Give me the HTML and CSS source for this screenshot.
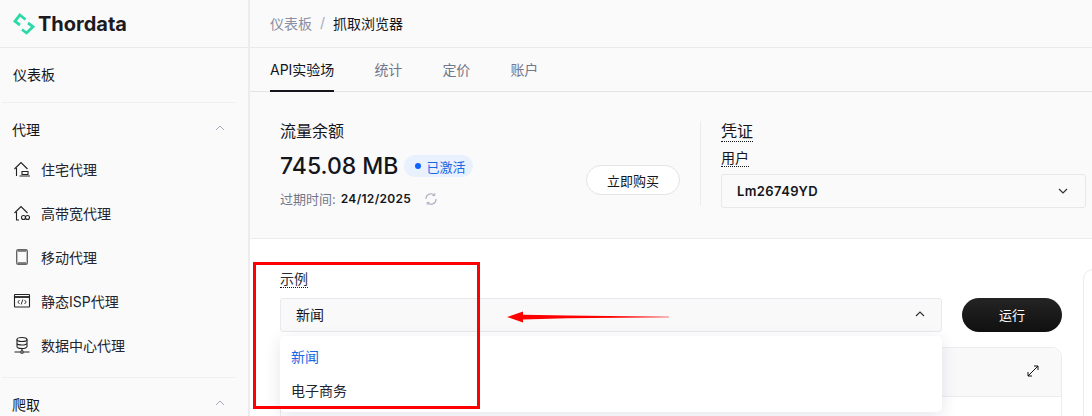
FILE: index.html
```html
<!DOCTYPE html>
<html lang="zh-CN">

<head>
  <meta charset="UTF-8" />
  <title>抓取浏览器</title>
  <link rel="stylesheet" href="styles.css">
</head>

<body>
  <div class="app">
    <!-- Sidebar -->
    <aside class="sidebar">
      <div class="logo">
        <svg class="logo-mark" width="22" height="22" viewBox="0 0 22 22" fill="none" stroke="#2bd9a8" stroke-width="2.8">
          <path d="M12.5 6.5 L6.8 2 L2 8.3 L7 12" />
          <path d="M15 10 L20 13.7 L13.5 20 L9 16.5" />
        </svg>
        <span class="logo-text">Thordata</span>
      </div>
      <div class="nav-top">仪表板</div>
      <div class="nav-group">
        <div class="nav-title"><span>代理</span><svg class="chev" width="10" height="6" viewBox="0 0 10 6" fill="none" stroke="#a4a9bd" stroke-width="1"><path d="M1 5 L5 1 L9 5" /></svg></div>
        <div class="nav-item">
          <svg width="18" height="18" viewBox="0 0 18 18" fill="none" stroke="#222" stroke-width="1.1"><path d="M1.5 9 L8 2.5 L14.5 9 M3.5 8 V16 M6.5 16 H17 M9 11.5 H15 V14.5 H9 Z" /></svg>
          <span>住宅代理</span>
        </div>
        <div class="nav-item">
          <svg width="18" height="18" viewBox="0 0 18 18" fill="none" stroke="#222" stroke-width="1.1"><path d="M1.5 9 L8 2.5 L14.5 9 M3.5 8 V16 H6" /><circle cx="10.5" cy="13.5" r="2" /><circle cx="14.5" cy="13.5" r="2" /></svg>
          <span>高带宽代理</span>
        </div>
        <div class="nav-item">
          <svg width="18" height="18" viewBox="0 0 18 18" fill="none" stroke="#666" stroke-width="1.4"><rect x="3.7" y="1.7" width="10.6" height="14.6" rx="1.5" /><path d="M5 3 H13 M5 15 H13" /></svg>
          <span>移动代理</span>
        </div>
        <div class="nav-item">
          <svg width="18" height="18" viewBox="0 0 18 18" fill="none" stroke="#222" stroke-width="1.1"><rect x="1.5" y="2.5" width="15" height="12.5" rx="0.5" /><path d="M1.5 5 H16.5" stroke-width="1.8" /><path d="M6.5 8 L4.8 10 L6.5 12 M11.5 8 L13.2 10 L11.5 12 M9.8 7.5 L8.2 12.5" stroke-width="0.9" /></svg>
          <span>静态ISP代理</span>
        </div>
        <div class="nav-item">
          <svg width="18" height="18" viewBox="0 0 18 18" fill="none" stroke="#222" stroke-width="1.1"><ellipse cx="9" cy="3.5" rx="5" ry="2" /><path d="M4 3.5 V10.5 C4 11.6 6.2 12.5 9 12.5 C11.8 12.5 14 11.6 14 10.5 V3.5 M4 7 C4 8.1 6.2 9 9 9 C11.8 9 14 8.1 14 7 M9 12.5 V15 M1.5 16 H7.5 M10.5 16 H16.5" /><circle cx="9" cy="16" r="1.3" /></svg>
          <span>数据中心代理</span>
        </div>
      </div>
      <div class="nav-title nav-title-last"><span>爬取</span><svg class="chev" width="10" height="6" viewBox="0 0 10 6" fill="none" stroke="#a4a9bd" stroke-width="1"><path d="M1 5 L5 1 L9 5" /></svg></div>
    </aside>

    <!-- Main -->
    <main class="main">
      <div class="breadcrumb">
        <span class="crumb-muted">仪表板</span>
        <span class="crumb-sep">/</span>
        <span>抓取浏览器</span>
      </div>

      <div class="tabs">
        <div class="tab active">API实验场</div>
        <div class="tab">统计</div>
        <div class="tab">定价</div>
        <div class="tab">账户</div>
      </div>

      <section class="summary">
        <div class="balance">
          <div class="balance-title">流量余额</div>
          <div class="balance-row">
            <span class="balance-value">745.08 MB</span>
            <span class="badge"><i class="badge-dot"></i>已激活</span>
          </div>
          <div class="expire">
            <span class="expire-label">过期时间:</span>
            <span class="expire-date">24/12/2025</span>
            <svg width="14" height="14" viewBox="0 0 14 14" fill="none" stroke="#a4a9bd" stroke-width="1.1"><path d="M2 7 A5 5 0 0 1 10.5 3.2 M12 7 A5 5 0 0 1 3.5 10.8" /><path d="M10.8 1.2 V3.6 H8.4 M3.2 12.8 V10.4 H5.6" stroke-width="0.9" /></svg>
          </div>
        </div>
        <button class="buy-btn">立即购买</button>
        <div class="credentials">
          <div class="cred-title"><span class="dotted">凭证</span></div>
          <div class="cred-label"><span class="dotted">用户</span></div>
          <div class="user-select">
            <span>Lm26749YD</span>
            <svg width="10" height="6" viewBox="0 0 10 6" fill="none" stroke="#333" stroke-width="1.2"><path d="M1 1 L5 5 L9 1" /></svg>
          </div>
        </div>
      </section>

      <section class="playground">
        <div class="example">
          <div class="example-label"><span class="dotted">示例</span></div>
          <div class="example-row">
            <div class="example-select">
              <span>新闻</span>
              <svg width="10" height="6" viewBox="0 0 10 6" fill="none" stroke="#333" stroke-width="1.2"><path d="M1 5 L5 1 L9 5" /></svg>
            </div>
            <button class="run-btn">运行</button>
          </div>
          <div class="editor">
            <svg class="expand" width="12" height="12" viewBox="0 0 12 12" fill="none" stroke="#111" stroke-width="1"><path d="M1 11 L11 1 M7 1 H11 V5 M1 7 V11 H5" /></svg>
          </div>
          <div class="dropdown">
            <div class="option selected">新闻</div>
            <div class="option">电子商务</div>
          </div>
        </div>
        <div class="side-panel"></div>

        <!-- Annotation drawn over the screenshot -->
        <div class="mark-box"></div>
        <svg class="mark-arrow" width="162" height="14" viewBox="0 0 162 14"><polygon points="0,7 16,1.5 16,4.8 60,5.5 162,6.8 162,7.2 60,8.3 16,9.4 16,12.5" fill="#ff0000" /></svg>
      </section>
    </main>
  </div>
</body>

</html>
```

FILE: styles.css
```css
* {
  box-sizing: border-box;
}

html,
body {
  margin: 0;
  height: 416px;
  overflow: hidden;
}

body {
  font-family: "Inter", "Noto Sans CJK SC", sans-serif;
  font-size: 14px;
  color: #14161c;
  background-color: #ffffff;
}

.app {
  display: flex;
  height: 416px;
  overflow: hidden;
}

/* Sidebar */
.sidebar {
  width: 250px;
  flex-shrink: 0;
  background-color: #fafafa;
  border-right: 2px solid #ececef;
}

.logo {
  height: 48px;
  display: flex;
  align-items: center;
  gap: 3px;
  padding-left: 13px;
  border-bottom: 1px solid #e9e9ec;
}

.logo-text {
  font-family: "Inter", sans-serif;
  font-size: 20px;
  font-weight: 700;
  color: #1a1a1f;
}

.nav-top {
  height: 54px;
  line-height: 54px;
  padding-left: 13px;
}

.nav-group {
  margin: 0 12px 0 2px;
  padding-bottom: 10px;
  border-top: 1px solid #f0f0f2;
  border-bottom: 1px solid #f0f0f2;
}

.nav-title {
  height: 44px;
  padding: 8px 11px 0 10px;
  display: flex;
  align-items: center;
  justify-content: space-between;
}

.nav-title-last {
  height: 52px;
  padding: 0 23px 0 12px;
}

.chev {
  margin-bottom: 2px;
}

.nav-item {
  height: 44px;
  display: flex;
  align-items: center;
  gap: 10px;
  padding-left: 11px;
  color: #222530;
}

/* Main */
.main {
  flex: 1;
  min-width: 0;
}

.breadcrumb {
  height: 48px;
  display: flex;
  align-items: center;
  gap: 8px;
  padding: 0 0 2px 20px;
  background-color: #fafafa;
  border-bottom: 1px solid #e9e9ec;
}

.crumb-muted {
  color: #8a8fa3;
}

.crumb-sep {
  color: #a4a9bd;
}

.tabs {
  height: 44px;
  display: flex;
  gap: 40px;
  padding-left: 20px;
  background-color: #fafafa;
  border-bottom: 1px solid #e4e4e7;
}

.tab {
  height: 44px;
  line-height: 43px;
  color: #73778a;
}

.tab.active {
  color: #14161c;
  border-bottom: 2px solid #14161c;
}

.summary {
  height: 147px;
  display: flex;
  padding: 29px 6px 0 30px;
  background-color: #fafafa;
  border-bottom: 1px solid #ececef;
}

.balance {
  width: 306px;
}

.balance-title {
  font-size: 16px;
  line-height: 20px;
}

.balance-row {
  display: flex;
  align-items: center;
  gap: 6px;
  margin-top: 12px;
}

.balance-value {
  font-size: 23px;
  font-weight: 500;
  line-height: 26px;
}

.badge {
  display: inline-flex;
  align-items: center;
  gap: 5px;
  height: 22px;
  padding: 0 8px 0 11px;
  font-size: 13px;
  color: #1668e3;
  background-color: #e9f1fe;
  border-radius: 11px;
}

.badge-dot {
  width: 6px;
  height: 6px;
  border-radius: 50%;
  background-color: #0f62fe;
}

.expire {
  display: flex;
  align-items: center;
  gap: 5px;
  margin-top: 10px;
  font-size: 13px;
}

.expire-label {
  color: #73778a;
}

.expire-date {
  font-size: 12px;
  font-weight: 600;
  letter-spacing: 0.3px;
  margin-right: 8px;
}

.buy-btn {
  width: 94px;
  height: 30px;
  margin-top: 44px;
  font-family: inherit;
  font-size: 13px;
  color: #14161c;
  background-color: #ffffff;
  border: 1px solid #e4e4e7;
  border-radius: 15px;
}

.credentials {
  width: 386px;
  height: 85px;
  margin-left: 20px;
  padding-left: 20px;
  border-left: 1px solid #ececef;
}

.cred-title {
  font-size: 16px;
  line-height: 20px;
}

.cred-label {
  margin-top: 8px;
  line-height: 18px;
}

.dotted {
  border-bottom: 1px dotted #14161c;
}

.user-select {
  height: 34px;
  margin-top: 7px;
  display: flex;
  align-items: center;
  justify-content: space-between;
  padding: 0 17px 0 15px;
  font-size: 13px;
  font-weight: 600;
  letter-spacing: 0.4px;
  background-color: #fafafa;
  border: 1px solid #e8e8eb;
  border-radius: 3px;
}

/* Playground */
.playground {
  position: relative;
  height: 177px;
  display: flex;
  padding: 30px 0 0 30px;
}

.example {
  position: relative;
  width: 782px;
}

.example-label {
  line-height: 20px;
  color: #2a2d38;
}

.example-row {
  display: flex;
  gap: 20px;
  margin-top: 9px;
}

.example-select {
  width: 662px;
  height: 34px;
  display: flex;
  align-items: center;
  justify-content: space-between;
  padding: 0 16px 2px 15px;
  background-color: #f9f9fa;
  border: 1px solid #e8e8ee;
  border-radius: 3px;
}

.run-btn {
  width: 100px;
  height: 34px;
  padding-bottom: 3px;
  font-family: inherit;
  font-size: 13px;
  color: #ffffff;
  background: linear-gradient(#242424, #101010);
  border: none;
  border-radius: 17px;
}

.editor {
  height: 90px;
  margin-top: 15px;
  background-color: #ffffff;
  border: 1px solid #ececef;
  border-radius: 10px 10px 0 0;
  position: relative;
}

.editor::before {
  content: "";
  display: block;
  height: 48px;
  background-color: #f9f9fa;
  border-bottom: 1px solid #ececef;
  border-radius: 10px 10px 0 0;
}

.expand {
  position: absolute;
  top: 17px;
  right: 22px;
}

.dropdown {
  position: absolute;
  top: 67px;
  left: 0;
  width: 662px;
  height: 76px;
  padding: 4px 0;
  background-color: #ffffff;
  border-radius: 5px;
  box-shadow: 0 4px 16px rgba(40, 50, 90, 0.12);
}

.option {
  height: 34px;
  line-height: 34px;
  padding-left: 11px;
  color: #222530;
}

.option.selected {
  color: #1668e3;
}

.side-panel {
  position: absolute;
  left: 833px;
  top: 30px;
  width: 30px;
  height: 200px;
  background-color: #ffffff;
  border: 1px solid #ececef;
  border-radius: 10px 0 0 0;
}

.mark-box {
  position: absolute;
  left: 3px;
  top: 23px;
  width: 227px;
  height: 147px;
  border: 3px solid #ff0000;
}

.mark-arrow {
  position: absolute;
  left: 257px;
  top: 71px;
}
```
